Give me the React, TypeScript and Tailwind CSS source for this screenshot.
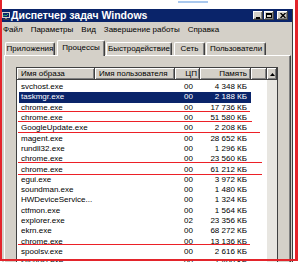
import React from "react";

type Row = {
  name: string;
  cpu: string;
  mem: string;
  selected?: boolean;
  mark?: string;
};

const ROWS: Row[] = [
  { name: "svchost.exe", cpu: "00", mem: "4 348 КБ" },
  { name: "taskmgr.exe", cpu: "00", mem: "2 188 КБ", selected: true },
  { name: "chrome.exe", cpu: "00", mem: "17 736 КБ", mark: "bottom-[1px] w-[232px]" },
  { name: "chrome.exe", cpu: "00", mem: "51 580 КБ", mark: "bottom-[1px] w-[234px]" },
  { name: "GoogleUpdate.exe", cpu: "00", mem: "2 208 КБ", mark: "bottom-[0px] w-[242px]" },
  { name: "magent.exe", cpu: "00", mem: "28 652 КБ" },
  { name: "rundll32.exe", cpu: "00", mem: "1 296 КБ" },
  { name: "chrome.exe", cpu: "00", mem: "23 560 КБ", mark: "bottom-[1px] w-[244px]" },
  { name: "chrome.exe", cpu: "00", mem: "61 212 КБ", mark: "bottom-[0px] w-[244px]" },
  { name: "egui.exe", cpu: "00", mem: "3 972 КБ" },
  { name: "soundman.exe", cpu: "00", mem: "1 480 КБ" },
  { name: "HWDeviceService...", cpu: "00", mem: "1 324 КБ" },
  { name: "ctfmon.exe", cpu: "00", mem: "1 564 КБ" },
  { name: "explorer.exe", cpu: "02", mem: "23 356 КБ" },
  { name: "ekrn.exe", cpu: "00", mem: "68 272 КБ" },
  { name: "chrome.exe", cpu: "00", mem: "13 136 КБ", mark: "bottom-[2px] w-[232px]" },
  { name: "spoolsv.exe", cpu: "00", mem: "2 616 КБ" },
  { name: "svchost.exe", cpu: "00", mem: "1 400 КБ" },
];

const MENU = ["Файл", "Параметры", "Вид", "Завершение работы", "Справка"];

const bevel = "shadow-[inset_-1px_-1px_#404040,inset_1px_1px_#ffffff,inset_-2px_-2px_#808080]";

function AppIcon() {
  return (
    <svg width="8" height="8" viewBox="0 0 8 8" className="shrink-0">
      <rect x="0" y="0" width="8" height="6" fill="#d4d0c8" />
      <rect x="1" y="1" width="6" height="4" fill="#0a246a" />
      <polyline points="1,4 3,3 4,4 6,2" fill="none" stroke="#3cd070" strokeWidth="0.8" />
      <rect x="3" y="6" width="2" height="1" fill="#808080" />
      <rect x="1" y="7" width="6" height="1" fill="#404040" />
    </svg>
  );
}

function CaptionButton({ kind }: { kind: "min" | "max" | "close" }) {
  return (
    <div className={`flex h-[9px] items-center justify-center bg-[#d4d0c8] ${bevel} ${kind === "close" ? "ml-[2px] w-[11px]" : "w-[10px]"}`}>
      {kind === "min" && <div className="mt-[4px] h-[2px] w-[4px] bg-black" />}
      {kind === "max" && <div className="h-[5px] w-[6px] border border-t-2 border-black" />}
      {kind === "close" && (
        <svg width="6" height="5" viewBox="0 0 6 5">
          <path d="M0.5 0 L5.5 5 M5.5 0 L0.5 5" stroke="#000" strokeWidth="1.4" />
        </svg>
      )}
    </div>
  );
}

function Tab({ label, width, active }: { label: string; width: string; active?: boolean }) {
  return (
    <div
      className={`flex items-center justify-center rounded-t-[2px] border-l border-t border-white bg-[#d4d0c8] shadow-[inset_-1px_0_#808080] border-r border-r-[#404040] ${width} ${
        active ? "relative z-10 -mb-px h-[16px] pb-[2px]" : "h-[13px]"
      }`}
    >
      {label}
    </div>
  );
}

export default function App() {
  return (
    <div className="relative h-[262px] w-[300px] overflow-hidden bg-white font-['Liberation_Sans',Arial,sans-serif] text-[8px] leading-none text-black">
      {/* strip of the window above */}
      <div className="h-[9px] pl-[178px] pt-px">
        <div className="h-[2px] w-[30px] bg-[#a9c8ee]" />
      </div>

      <div className="ml-[2px] w-[291px] border-r border-[#404040] bg-[#d4d0c8]">
        {/* Title bar */}
        <div className="flex h-[13px] items-center bg-[#0a246a] pr-[4px]">
          <AppIcon />
          <span className="ml-[1px] text-[10.5px] font-bold text-white">Диспетчер задач Windows</span>
          <div className="ml-auto flex gap-px">
            <CaptionButton kind="min" />
            <CaptionButton kind="max" />
            <CaptionButton kind="close" />
          </div>
        </div>

        {/* Menu */}
        <div className="flex h-[15px] items-center gap-[8px] pl-px">
          {MENU.map(m => (
            <span key={m}>{m}</span>
          ))}
        </div>

        {/* Tabs */}
        <div className="flex h-[18px] items-end pl-[3px]">
          <Tab label="Приложения" width="w-[50px]" />
          <div className="ml-[2px]">
            <Tab label="Процессы" width="w-[48px]" active />
          </div>
          <div className="ml-[1px]">
            <Tab label="Быстродействие" width="w-[66px]" />
          </div>
          <div className="ml-[2px]">
            <Tab label="Сеть" width="w-[31px]" />
          </div>
          <div className="ml-[1px]">
            <Tab label="Пользователи" width="w-[60px]" />
          </div>
        </div>

        {/* Panel */}
        <div className="ml-[2px] h-[210px] w-[287px] border-l border-t border-white pl-[11px] pt-[11px] shadow-[inset_-1px_0_#808080] border-r border-r-[#404040]">
          <div className="flex h-[200px] w-[262px] border border-[#404040] bg-white">
            {/* list body */}
            <div className="w-[250px]">
              <div className="flex h-[12px]">
                <div className={`flex w-[78px] items-center bg-[#d4d0c8] pl-[4px] ${bevel}`}>Имя образа</div>
                <div className={`flex w-[80px] items-center bg-[#d4d0c8] pl-[4px] ${bevel}`}>Имя пользователя</div>
                <div className={`flex w-[25px] items-center justify-end bg-[#d4d0c8] pr-[3px] ${bevel}`}>ЦП</div>
                <div className={`flex w-[51px] items-center justify-end bg-[#d4d0c8] pr-[4px] ${bevel}`}>Память</div>
                <div className={`flex-1 bg-[#d4d0c8] ${bevel}`} />
              </div>
              <div className="pt-[2px]">
                {ROWS.map((r, i) => (
                  <div key={i} className="relative h-[10.3px]">
                    <div
                      className={`ml-[2px] flex h-full w-[232px] items-center ${
                        r.selected ? "bg-[#0a246a] text-white" : ""
                      }`}
                    >
                      <span className="w-[76px] whitespace-nowrap pl-[2px]">{r.name}</span>
                      <span className="w-[80px]" />
                      <span className="w-[25px] pr-[7px] text-right">{r.cpu}</span>
                      <span className="w-[51px] whitespace-nowrap pr-[4px] text-right">{r.mem}</span>
                    </div>
                    {r.mark && <div className={`absolute left-[1px] h-px bg-[#ec2027] ${r.mark}`} />}
                  </div>
                ))}
              </div>
            </div>

            {/* scrollbar */}
            <div className="flex w-[10px] flex-col">
              <div className={`flex h-[12px] items-center justify-center bg-[#d4d0c8] ${bevel}`}>
                <svg width="5" height="3" viewBox="0 0 5 3">
                  <path d="M2.5 0 L5 3 L0 3 Z" fill="#000" />
                </svg>
              </div>
              <div className="flex-1 bg-[#e8e6e1]" />
            </div>
          </div>
        </div>
      </div>

      {/* red annotation frame */}
      <div className="pointer-events-none absolute left-0 top-0 h-[261px] w-[298px] border-b-2 border-l-2 border-r-[3px] border-[#e3242b]" />
    </div>
  );
}
